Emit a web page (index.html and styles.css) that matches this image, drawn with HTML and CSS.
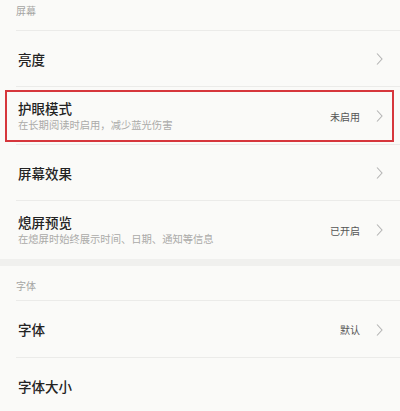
FILE: index.html
```html
<!DOCTYPE html>
<html lang="zh-CN">
<head>
<meta charset="utf-8">
<link rel="stylesheet" href="styles.css">
</head>
<body>
<div class="page">
  <div class="section-header first">屏幕</div>
  <div class="row h55">
    <div class="text"><div class="title">亮度</div></div>
    <div class="right"><span class="chev"><svg width="7" height="12" viewBox="0 0 7 12"><path d="M1 0.5 L6 6 L1 11.5" fill="none" stroke="#b4b4b4" stroke-width="1.1"/></svg></span></div>
  </div>
  <div class="row h58 highlighted">
    <div class="text">
      <div class="title">护眼模式</div>
      <div class="sub">在长期阅读时启用，减少蓝光伤害</div>
    </div>
    <div class="right"><span class="value">未启用</span><span class="chev"><svg width="7" height="12" viewBox="0 0 7 12"><path d="M1 0.5 L6 6 L1 11.5" fill="none" stroke="#b4b4b4" stroke-width="1.1"/></svg></span></div>
  </div>
  <div class="row h55">
    <div class="text"><div class="title">屏幕效果</div></div>
    <div class="right"><span class="chev"><svg width="7" height="12" viewBox="0 0 7 12"><path d="M1 0.5 L6 6 L1 11.5" fill="none" stroke="#b4b4b4" stroke-width="1.1"/></svg></span></div>
  </div>
  <div class="row h58 last">
    <div class="text">
      <div class="title">熄屏预览</div>
      <div class="sub">在熄屏时始终展示时间、日期、通知等信息</div>
    </div>
    <div class="right"><span class="value">已开启</span><span class="chev"><svg width="7" height="12" viewBox="0 0 7 12"><path d="M1 0.5 L6 6 L1 11.5" fill="none" stroke="#b4b4b4" stroke-width="1.1"/></svg></span></div>
  </div>
  <div class="band"></div>
  <div class="section-header second">字体</div>
  <div class="row h56">
    <div class="text"><div class="title">字体</div></div>
    <div class="right"><span class="value">默认</span><span class="chev"><svg width="7" height="12" viewBox="0 0 7 12"><path d="M1 0.5 L6 6 L1 11.5" fill="none" stroke="#b4b4b4" stroke-width="1.1"/></svg></span></div>
  </div>
  <div class="row h56 last">
    <div class="text"><div class="title">字体大小</div></div>
  </div>
</div>
</body>
</html>
```
FILE: styles.css
```css
html, body {
  margin: 0;
  padding: 0;
  background: #fafaf8;
}
body {
  font-family: "Noto Sans CJK SC", "Noto Sans", sans-serif;
  width: 400px;
  height: 411px;
  overflow: hidden;
}
.page {
  display: flex;
  flex-direction: column;
}
.section-header {
  font-size: 10px;
  line-height: 14px;
  color: #a5a5a3;
  padding-left: 16px;
  position: relative;
}
.section-header::after {
  content: "";
  position: absolute;
  left: 16px;
  right: 0;
  bottom: 0;
  height: 1px;
  background: #ebebe9;
}
.section-header.first {
  padding-top: 4px;
  height: 27px;
}
.section-header.second {
  padding-top: 13px;
  height: 22px;
}
.row {
  display: flex;
  align-items: center;
  justify-content: space-between;
  padding: 0 17px 0 18px;
  position: relative;
  box-sizing: border-box;
}
.row::after {
  content: "";
  position: absolute;
  left: 16px;
  right: 0;
  bottom: 0;
  height: 1px;
  background: #ebebe9;
}
.row.last::after {
  display: none;
}
.h55 { height: 56px; }
.h56 { height: 57px; }
.h58 { height: 58px; }
.text {
  display: flex;
  flex-direction: column;
  gap: 1px;
}
.title {
  font-size: 13.5px;
  line-height: 17px;
  font-weight: 500;
  color: #232323;
}
.sub {
  font-size: 10.3px;
  line-height: 14px;
  color: #abaaa8;
}
.right {
  display: flex;
  align-items: center;
  gap: 16px;
}
.value {
  font-size: 10px;
  color: #555;
}
.chev {
  display: flex;
  width: 7px;
  height: 12px;
}
.highlighted::before {
  content: "";
  position: absolute;
  top: 3px;
  bottom: 3px;
  left: 5px;
  right: 6px;
  border: 2px solid #d6363c;
}
.band {
  height: 7px;
  background: #f0f0ee;
}
```
